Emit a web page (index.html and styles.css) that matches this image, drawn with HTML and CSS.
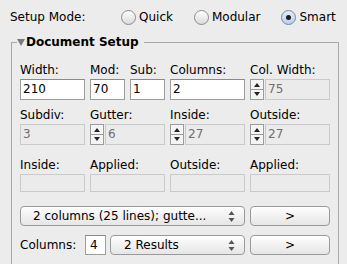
FILE: index.html
```html
<!DOCTYPE html>
<html lang="en">
<head>
    <meta charset="UTF-8">
    <title>Document Setup</title>
    <link rel="stylesheet" href="styles.css">
</head>
<body>
    <div class="mode">
        <span class="mode-label">Setup Mode:</span>
        <label class="radio"><span class="dot"></span>Quick</label>
        <label class="radio"><span class="dot"></span>Modular</label>
        <label class="radio"><span class="dot on"></span>Smart</label>
    </div>

    <fieldset class="group">
        <legend><span class="tri"></span>Document Setup</legend>

        <div class="row">
            <div><div class="lbl">Width:</div><div class="field">210</div></div>
            <div class="pair">
                <div><div class="lbl">Mod:</div><div class="field">70</div></div>
                <div><div class="lbl">Sub:</div><div class="field">1</div></div>
            </div>
            <div><div class="lbl">Columns:</div><div class="field">2</div></div>
            <div>
                <div class="lbl">Col. Width:</div>
                <div class="step">
                    <svg width="14" height="21" viewBox="0 0 14 21"><rect x="0.5" y="0.5" width="13" height="20" fill="#f4f4f4" stroke="#9b9b9b"/><line x1="1" y1="10.5" x2="13" y2="10.5" stroke="#9b9b9b"/><path d="M4 8h6l-3-4z" fill="#222"/><path d="M4 13h6l-3 4z" fill="#222"/></svg>
                    <div class="field off">75</div>
                </div>
            </div>
        </div>

        <div class="row r2">
            <div><div class="lbl">Subdiv:</div><div class="field off">3</div></div>
            <div>
                <div class="lbl">Gutter:</div>
                <div class="step">
                    <svg width="14" height="21" viewBox="0 0 14 21"><rect x="0.5" y="0.5" width="13" height="20" fill="#f4f4f4" stroke="#9b9b9b"/><line x1="1" y1="10.5" x2="13" y2="10.5" stroke="#9b9b9b"/><path d="M4 8h6l-3-4z" fill="#222"/><path d="M4 13h6l-3 4z" fill="#222"/></svg>
                    <div class="field off">6</div>
                </div>
            </div>
            <div>
                <div class="lbl">Inside:</div>
                <div class="step">
                    <svg width="14" height="21" viewBox="0 0 14 21"><rect x="0.5" y="0.5" width="13" height="20" fill="#f4f4f4" stroke="#9b9b9b"/><line x1="1" y1="10.5" x2="13" y2="10.5" stroke="#9b9b9b"/><path d="M4 8h6l-3-4z" fill="#222"/><path d="M4 13h6l-3 4z" fill="#222"/></svg>
                    <div class="field off">27</div>
                </div>
            </div>
            <div>
                <div class="lbl">Outside:</div>
                <div class="step">
                    <svg width="14" height="21" viewBox="0 0 14 21"><rect x="0.5" y="0.5" width="13" height="20" fill="#f4f4f4" stroke="#9b9b9b"/><line x1="1" y1="10.5" x2="13" y2="10.5" stroke="#9b9b9b"/><path d="M4 8h6l-3-4z" fill="#222"/><path d="M4 13h6l-3 4z" fill="#222"/></svg>
                    <div class="field off">27</div>
                </div>
            </div>
        </div>

        <div class="row r3">
            <div><div class="lbl">Inside:</div><div class="field off short"></div></div>
            <div><div class="lbl">Applied:</div><div class="field off short"></div></div>
            <div><div class="lbl">Outside:</div><div class="field off short"></div></div>
            <div><div class="lbl">Applied:</div><div class="field off short"></div></div>
        </div>

        <div class="actions">
            <div class="popup">2 columns (25 lines); gutte...<svg class="arrows" width="7" height="11" viewBox="0 0 7 11"><path d="M0.5 4h6l-3-4z" fill="#555"/><path d="M0.5 7h6l-3 4z" fill="#555"/></svg></div>
            <div class="btn">&gt;</div>
        </div>

        <div class="last">
            <span class="last-label">Columns:</span>
            <div class="field num">4</div>
            <div class="popup small">2 Results<svg class="arrows" width="7" height="11" viewBox="0 0 7 11"><path d="M0.5 4h6l-3-4z" fill="#555"/><path d="M0.5 7h6l-3 4z" fill="#555"/></svg></div>
            <div class="btn">&gt;</div>
        </div>
    </fieldset>
</body>
</html>
```

FILE: styles.css
```css
body {
    margin: 0;
    background-color: #ececec;
    font-family: "DejaVu Sans", sans-serif;
    font-size: 12px;
    color: #000;
    overflow: hidden;
}

.mode {
    display: flex;
    align-items: center;
    height: 34px;
    padding-left: 10px;
}

.mode-label {
    flex: none;
    width: 111px;
}

.radio {
    flex: none;
    display: flex;
    align-items: center;
    gap: 3px;
    margin-right: 21px;
}

.radio:last-child {
    margin-right: 0;
}

.dot {
    position: relative;
    width: 13px;
    height: 13px;
    border: 1px solid #8c8c8c;
    border-radius: 50%;
    background: linear-gradient(#ffffff, #dadada);
}

.dot.on {
    border-color: #6f87a8;
    background: linear-gradient(#e4eefb, #b9cfec);
}

.dot.on::after {
    content: "";
    position: absolute;
    left: 4px;
    top: 4px;
    width: 5px;
    height: 5px;
    border-radius: 50%;
    background: #1c1c1c;
}

.group {
    margin: 0 8px 0 11px;
    padding: 13px 8px 30px;
    border: 1px solid #a8a8a8;
    min-width: 0;
}

.group legend {
    margin-left: -3px;
    padding: 0 5px 0 0;
    font-weight: bold;
    line-height: 16px;
}

.tri {
    display: inline-block;
    width: 0;
    height: 0;
    border-left: 4px solid transparent;
    border-right: 4px solid transparent;
    border-top: 7px solid #7c7c7c;
    margin-right: 1px;
    vertical-align: 0;
}

.row {
    display: grid;
    grid-template-columns: 65px 75px 75px 80px;
    column-gap: 5px;
}

.r2 {
    margin-top: 8px;
}

.r3 {
    margin-top: 13px;
}

.pair {
    display: grid;
    grid-template-columns: 35px 35px;
    column-gap: 5px;
}

.lbl {
    line-height: 15px;
    margin-bottom: 1px;
    white-space: nowrap;
}

.field {
    box-sizing: border-box;
    height: 21px;
    border: 1px solid #9d9d9d;
    border-top-color: #8a8a8a;
    background: #fff;
    padding-left: 2px;
    line-height: 19px;
}

.field.off {
    background: #ebebeb;
    border-color: #cacaca;
    color: #6f6f6f;
}

.field.short {
    height: 18px;
}

.step {
    display: flex;
    gap: 1px;
}

.step svg {
    flex: none;
}

.step .field {
    flex: 1;
}

.actions {
    display: grid;
    grid-template-columns: 225px 80px;
    column-gap: 5px;
    margin-top: 14px;
}

.popup, .btn {
    box-sizing: border-box;
    height: 20px;
    border: 1px solid #9a9a9a;
    border-radius: 4px;
    background: linear-gradient(#ffffff, #f1f1f1 50%, #e6e6e6);
    line-height: 18px;
}

.popup {
    display: flex;
    align-items: center;
    padding-left: 12px;
    padding-right: 9px;
}

.arrows {
    margin-left: auto;
}

.btn {
    text-align: center;
}

.last {
    display: flex;
    align-items: center;
    margin-top: 9px;
}

.last-label {
    width: 65px;
}

.field.num {
    flex: none;
    width: 21px;
    height: 20px;
    line-height: 18px;
    padding-left: 4px;
    margin-right: 4px;
}

.popup.small {
    flex: none;
    width: 135px;
    margin-right: 5px;
    padding-left: 13px;
}

.last .btn {
    flex: none;
    width: 80px;
}
```
